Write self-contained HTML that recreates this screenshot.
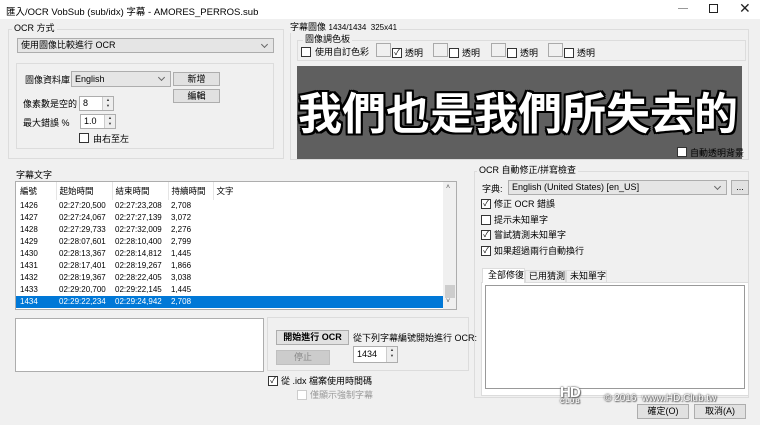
<!DOCTYPE html>
<html><head><meta charset="utf-8"><style>
*{box-sizing:border-box;margin:0;padding:0}
body{width:760px;height:425px;background:#f0f0f0;font-family:"Liberation Sans","Noto Sans CJK TC",sans-serif;font-size:9px;color:#000;position:relative;overflow:hidden}
.a{position:absolute;white-space:nowrap}
.grp{position:absolute;border:1px solid #dcdcdc}
.lbl{position:absolute;background:#f0f0f0;padding:0 2px;line-height:11px;font-size:9px}
.combo{position:absolute;background:#e5e5e5;border:1px solid #adadad;line-height:13px;padding-left:3px;font-size:9px}
.combo:after{content:"";position:absolute;right:6px;top:3px;width:4px;height:4px;border-right:1px solid #666;border-bottom:1px solid #666;transform:rotate(45deg)}
.btn{position:absolute;background:#e1e1e1;border:1px solid #adadad;text-align:center;line-height:12px;font-size:9px}
.spin{position:absolute;background:#fff;border:1px solid #adadad;line-height:12px;padding-left:3px;font-size:9px}
.spin:after{content:"▲\A▼";white-space:pre;position:absolute;right:0;top:0;width:10px;height:100%;background:#eee;border-left:1px solid #ccc;font-size:4px;line-height:6px;text-align:center;color:#333}
.cb{position:absolute;width:10px;height:10px;border:1px solid #333;background:#fff;font-size:8px;line-height:8px;text-align:center}
.sw{position:absolute;width:15px;height:14px;border:1px solid #aaa;background:#f0f0f0}
table{border-collapse:collapse}
.wm{color:#fff;text-shadow:0 0 1px #555,0 0 2px #666,1px 1px 1px #777}
</style></head><body>
<div class="a" style="left:0;top:0;width:760px;height:19px;background:#fff"></div>
<div class="a" style="left:6px;top:4px;font-size:9.5px">匯入/OCR VobSub (sub/idx) 字幕 - AMORES_PERROS.sub</div>
<div class="a" style="left:678px;top:8px;width:10px;border-top:1px solid #999"></div>
<div class="a" style="left:709px;top:4px;width:9px;height:9px;border:1px solid #222"></div>
<div class="a" style="left:739px;top:0px;font-size:14px;color:#222">✕</div>

<!-- OCR method -->
<div class="grp" style="left:8px;top:29px;width:276px;height:130px"></div>
<div class="lbl" style="left:12px;top:23px">OCR 方式</div>
<div class="combo" style="left:17px;top:38px;width:257px;height:15px">使用圖像比較進行 OCR</div>
<div class="grp" style="left:16px;top:63px;width:258px;height:86px"></div>
<div class="a" style="left:25px;top:73px">圖像資料庫</div>
<div class="combo" style="left:71px;top:71px;width:100px;height:16px;line-height:14px">English</div>
<div class="btn" style="left:173px;top:72px;width:47px;height:14px">新增</div>
<div class="btn" style="left:173px;top:89px;width:47px;height:14px">編輯</div>
<div class="a" style="left:23px;top:97px">像素數是空的</div>
<div class="spin" style="left:79px;top:96px;width:35px;height:15px">8</div>
<div class="a" style="left:23px;top:116px">最大錯誤 %</div>
<div class="spin" style="left:80px;top:114px;width:36px;height:15px">1.0</div>
<div class="cb" style="left:79px;top:133px"></div>
<div class="a" style="left:93px;top:132px">由右至左</div>

<!-- subtitle image -->
<div class="grp" style="left:290px;top:29px;width:459px;height:131px"></div>
<div class="lbl" style="left:288px;top:22px">字幕圖像 <span style="font-size:8px">1434/1434 &nbsp;325x41</span></div>
<div class="grp" style="left:297px;top:40px;width:449px;height:21px"></div>
<div class="lbl" style="left:303px;top:34px">圖像調色板</div>
<div class="cb" style="left:301px;top:47px"></div>
<div class="a" style="left:315px;top:45px">使用自訂色彩</div>
<div class="sw" style="left:376px;top:43px"></div><div class="cb" style="left:392px;top:48px">✓</div><div class="a" style="left:405px;top:46px">透明</div>
<div class="sw" style="left:433px;top:43px"></div><div class="cb" style="left:449px;top:48px"></div><div class="a" style="left:462px;top:46px">透明</div>
<div class="sw" style="left:491px;top:43px"></div><div class="cb" style="left:507px;top:48px"></div><div class="a" style="left:520px;top:46px">透明</div>
<div class="sw" style="left:548px;top:43px"></div><div class="cb" style="left:564px;top:48px"></div><div class="a" style="left:577px;top:46px">透明</div>
<div class="a" style="left:297px;top:66px;width:445px;height:93px;background:#5f5f5f;overflow:hidden">
<div style="position:absolute;left:1px;top:20px;font-family:'Noto Sans CJK TC',sans-serif;font-weight:bold;font-size:44px;line-height:48px;color:#fff;letter-spacing:0px;text-shadow:-2px -2px 0 #000,2px -2px 0 #000,-2px 2px 0 #000,2px 2px 0 #000,0 2px 0 #000,0 -2px 0 #000,2px 0 0 #000,-2px 0 0 #000">我們也是我們所失去的</div>
</div>
<div class="cb" style="left:677px;top:147px"></div>
<div class="a" style="left:690px;top:146px">自動透明背景</div>

<!-- subtitle text table -->
<div class="a" style="left:16px;top:168px">字幕文字</div>
<div class="a" style="left:15px;top:181px;width:442px;height:129px;background:#fff;border:1px solid #adadad;overflow:hidden">
<div class="a" style="left:427px;top:0;width:13px;height:127px;background:#f0f0f0"></div>
<div class="a" style="left:430px;top:2px;font-size:7px;color:#555">˄</div>
<div class="a" style="left:430px;top:116px;font-size:7px;color:#555">˅</div>
<div class="a" style="left:429px;top:103px;width:10px;height:13px;background:#cdcdcd"></div>
<table style="position:absolute;left:0;top:0;width:427px;font-size:8.5px">
<tr style="height:18px"><td style="width:40px;padding-left:4px;border-right:1px solid #e5e5e5">編號</td><td style="width:56px;padding-left:3px;border-right:1px solid #e5e5e5">起始時間</td><td style="width:56px;padding-left:3px;border-right:1px solid #e5e5e5">結束時間</td><td style="width:45px;padding-left:3px;border-right:1px solid #e5e5e5">持續時間</td><td style="padding-left:3px">文字</td></tr>
</table>
<div class="a" style="left:0;top:18px;width:427px;font-size:8px;line-height:12px">
<div style="position:relative;height:12px"><span class="a" style="left:4px">1426</span><span class="a" style="left:43px">02:27:20,500</span><span class="a" style="left:99px">02:27:23,208</span><span class="a" style="left:155px">2,708</span></div>
<div style="position:relative;height:12px"><span class="a" style="left:4px">1427</span><span class="a" style="left:43px">02:27:24,067</span><span class="a" style="left:99px">02:27:27,139</span><span class="a" style="left:155px">3,072</span></div>
<div style="position:relative;height:12px"><span class="a" style="left:4px">1428</span><span class="a" style="left:43px">02:27:29,733</span><span class="a" style="left:99px">02:27:32,009</span><span class="a" style="left:155px">2,276</span></div>
<div style="position:relative;height:12px"><span class="a" style="left:4px">1429</span><span class="a" style="left:43px">02:28:07,601</span><span class="a" style="left:99px">02:28:10,400</span><span class="a" style="left:155px">2,799</span></div>
<div style="position:relative;height:12px"><span class="a" style="left:4px">1430</span><span class="a" style="left:43px">02:28:13,367</span><span class="a" style="left:99px">02:28:14,812</span><span class="a" style="left:155px">1,445</span></div>
<div style="position:relative;height:12px"><span class="a" style="left:4px">1431</span><span class="a" style="left:43px">02:28:17,401</span><span class="a" style="left:99px">02:28:19,267</span><span class="a" style="left:155px">1,866</span></div>
<div style="position:relative;height:12px"><span class="a" style="left:4px">1432</span><span class="a" style="left:43px">02:28:19,367</span><span class="a" style="left:99px">02:28:22,405</span><span class="a" style="left:155px">3,038</span></div>
<div style="position:relative;height:12px"><span class="a" style="left:4px">1433</span><span class="a" style="left:43px">02:29:20,700</span><span class="a" style="left:99px">02:29:22,145</span><span class="a" style="left:155px">1,445</span></div>
<div style="position:relative;height:12px;background:#0078d7;color:#fff"><span class="a" style="left:4px">1434</span><span class="a" style="left:43px">02:29:22,234</span><span class="a" style="left:99px">02:29:24,942</span><span class="a" style="left:155px">2,708</span></div>
</div>
</div>

<!-- bottom left -->
<div class="a" style="left:15px;top:318px;width:249px;height:54px;background:#fff;border:1px solid #adadad"></div>
<div class="grp" style="left:267px;top:317px;width:202px;height:54px"></div>
<div class="btn" style="left:276px;top:330px;width:73px;height:15px;font-weight:bold">開始進行 OCR</div>
<div class="btn" style="left:276px;top:350px;width:54px;height:15px;background:#ccc;border-color:#bfbfbf;color:#888">停止</div>
<div class="a" style="left:353px;top:331px">從下列字幕編號開始進行 OCR:</div>
<div class="spin" style="left:353px;top:346px;width:45px;height:17px;line-height:14px">1434</div>
<div class="cb" style="left:268px;top:376px;font-size:8px">✓</div>
<div class="a" style="left:281px;top:374px">從 .idx 檔案使用時間碼</div>
<div class="cb" style="left:297px;top:390px;border-color:#ccc"></div>
<div class="a" style="left:310px;top:388px;color:#999">僅顯示強制字幕</div>

<!-- right -->
<div class="grp" style="left:474px;top:171px;width:275px;height:227px"></div>
<div class="lbl" style="left:477px;top:165px">OCR 自動修正/拼寫檢查</div>
<div class="a" style="left:482px;top:182px">字典:</div>
<div class="combo" style="left:508px;top:180px;width:219px;height:15px">English (United States) [en_US]</div>
<div class="btn" style="left:731px;top:180px;width:18px;height:15px">...</div>
<div class="cb" style="left:481px;top:199px">✓</div><div class="a" style="left:494px;top:197px">修正 OCR 錯誤</div>
<div class="cb" style="left:481px;top:215px"></div><div class="a" style="left:494px;top:213px">提示未知單字</div>
<div class="cb" style="left:481px;top:230px">✓</div><div class="a" style="left:494px;top:228px">嘗試猜測未知單字</div>
<div class="cb" style="left:481px;top:246px">✓</div><div class="a" style="left:494px;top:244px">如果超過兩行自動換行</div>
<div class="a" style="left:481px;top:282px;width:268px;height:114px;background:#fff;border:1px solid #dcdcdc"></div>
<div class="a" style="left:482px;top:268px;width:43px;height:15px;background:#fff;border:1px solid #dcdcdc;border-bottom:none;padding-left:5px;line-height:13px">全部修復</div>
<div class="a" style="left:525px;top:270px;width:41px;height:13px;border:1px solid #dcdcdc;padding-left:3px;line-height:11px">已用猜測</div>
<div class="a" style="left:566px;top:270px;width:41px;height:13px;border:1px solid #dcdcdc;padding-left:3px;line-height:11px">未知單字</div>
<div class="a" style="left:485px;top:285px;width:260px;height:104px;border:1px solid #999;background:#fff"></div>

<!-- watermark -->
<div class="a wm" style="left:560px;top:384px;font:bold 15px 'Liberation Sans',sans-serif;letter-spacing:-1px">HD</div>
<div class="a wm" style="left:560px;top:399px;font:bold 6px 'Liberation Sans',sans-serif;letter-spacing:1px">CLUB</div>
<div class="a wm" style="left:604px;top:393px;font:10px 'Liberation Sans',sans-serif">© 2016&nbsp; www.HD.Club.tw</div>
<div class="btn" style="left:637px;top:404px;width:52px;height:15px">確定(O)</div>
<div class="btn" style="left:694px;top:404px;width:52px;height:15px">取消(A)</div>
</body></html>
